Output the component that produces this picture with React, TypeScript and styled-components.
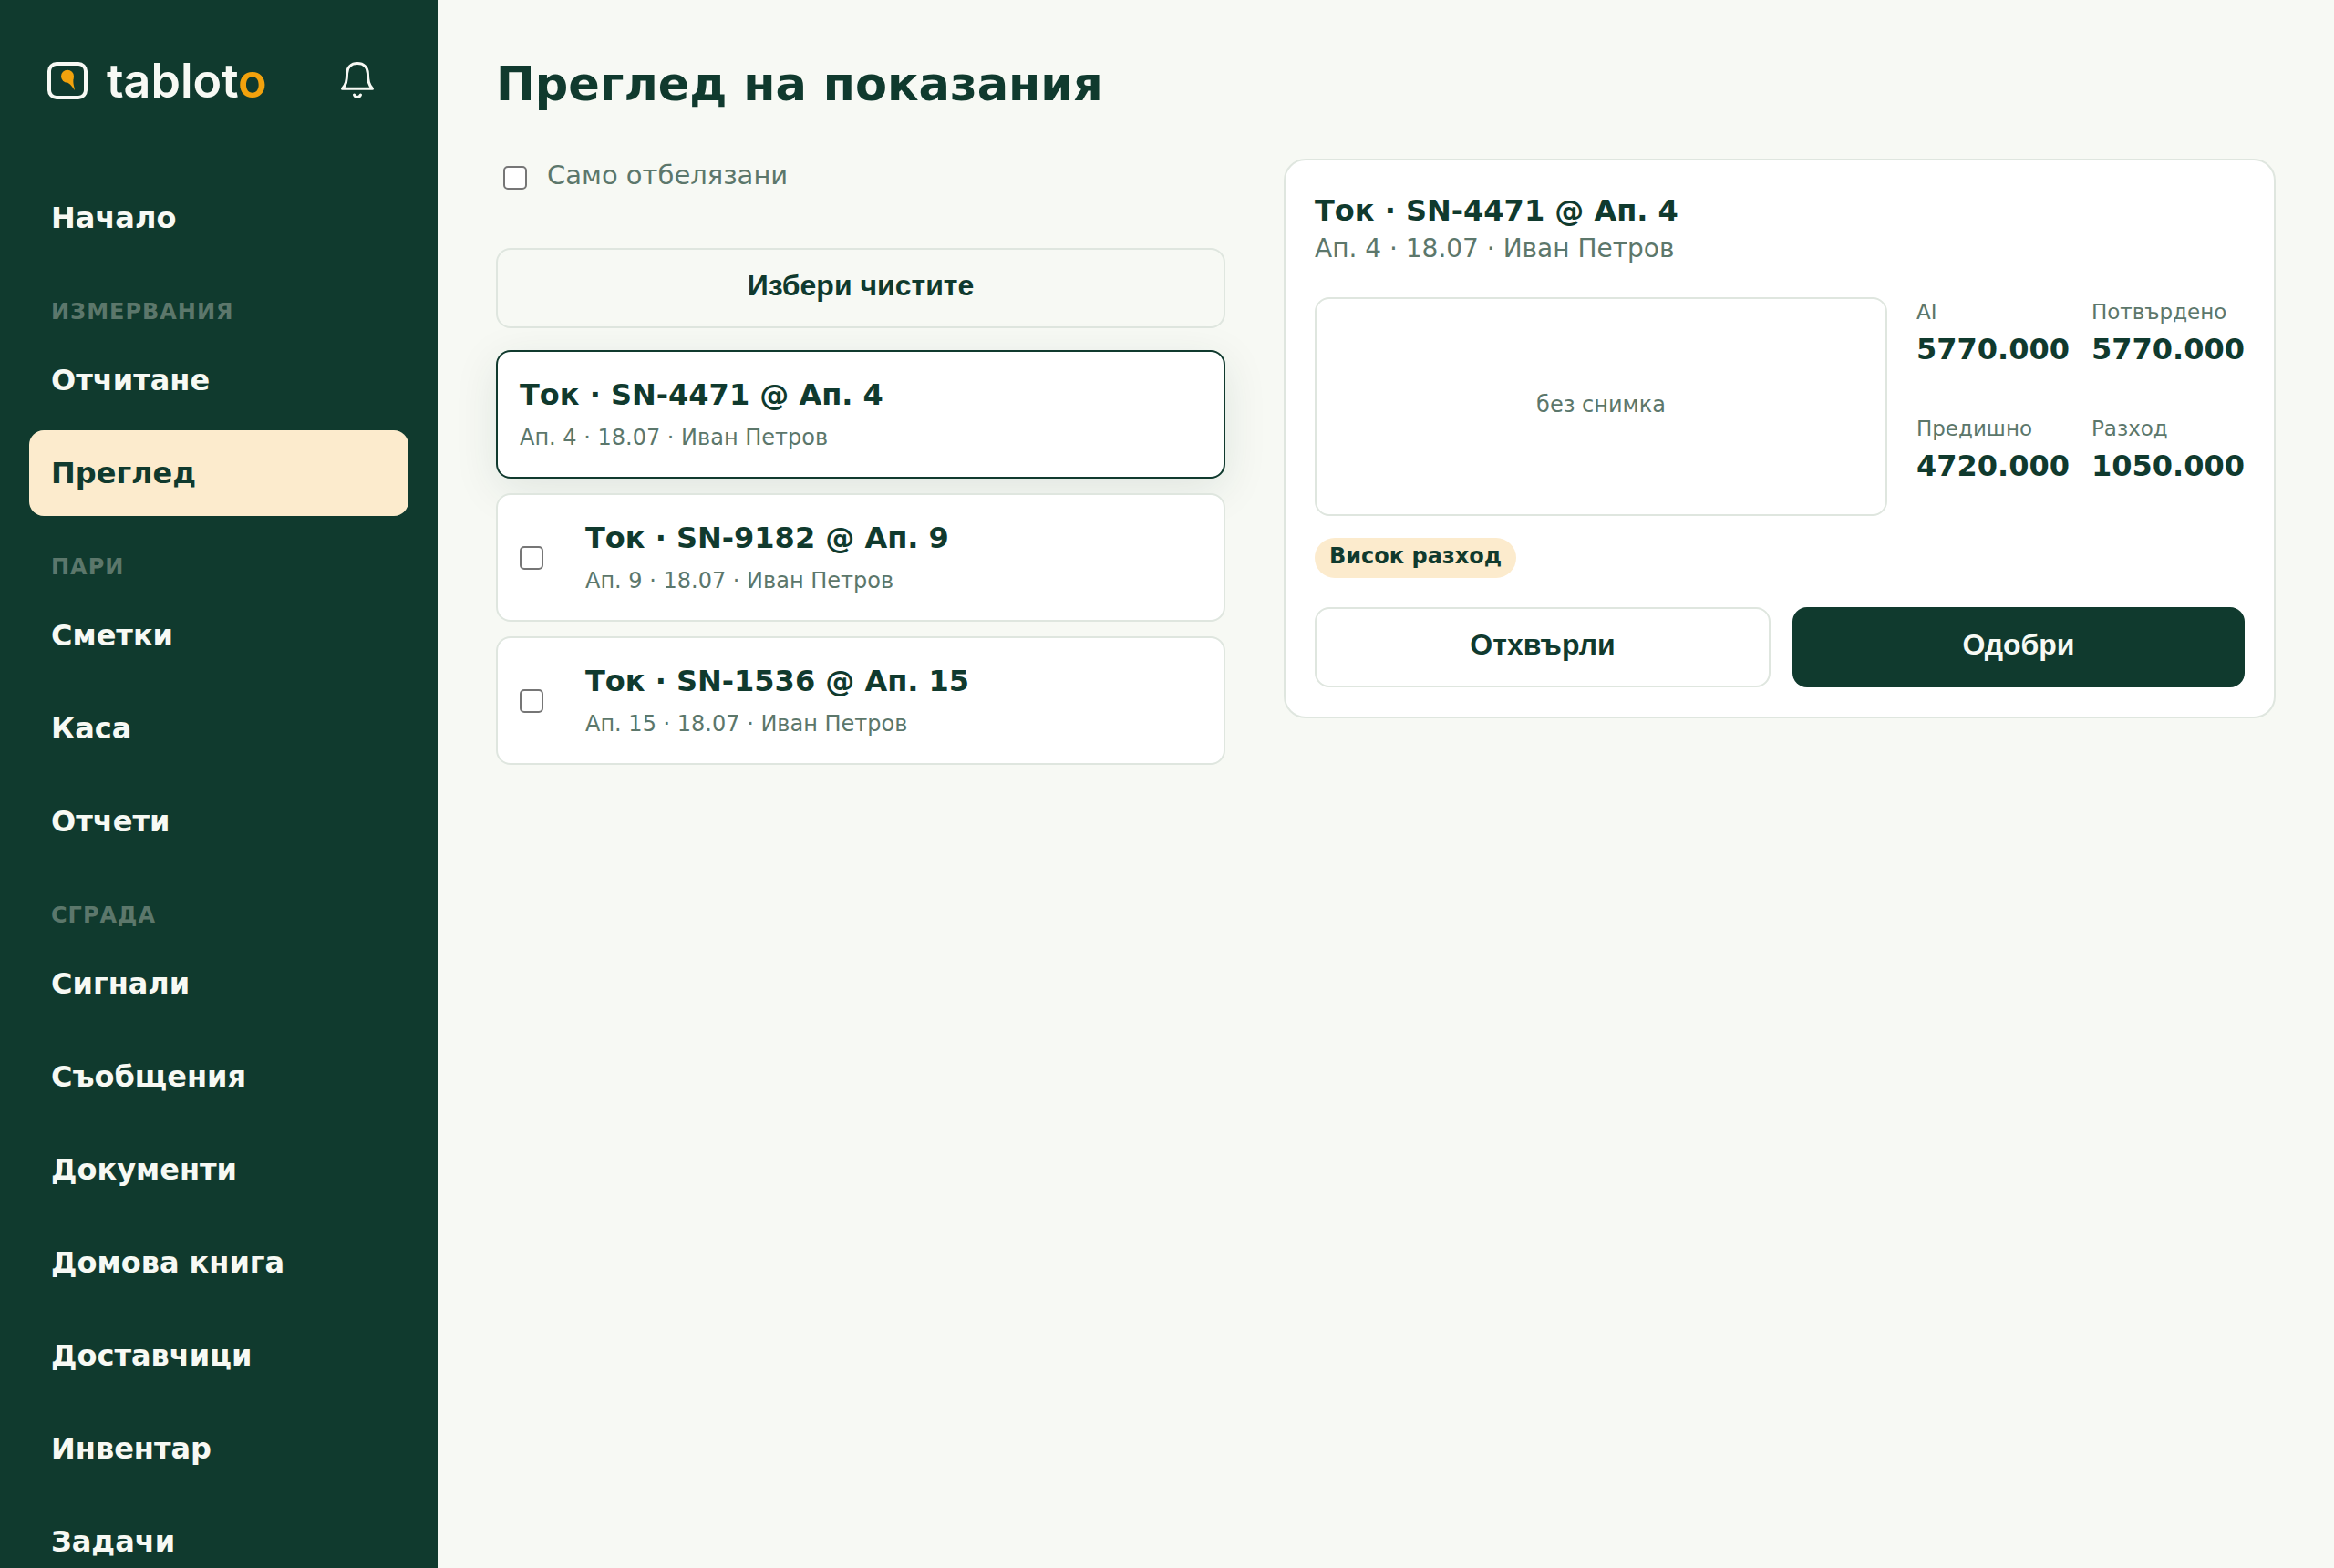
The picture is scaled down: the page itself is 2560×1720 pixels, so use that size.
import React, { useState } from 'react';
import styled, { createGlobalStyle, css } from 'styled-components';

const color = {
  forest: '#103a2e',
  paper: '#f7f9f4',
  white: '#ffffff',
  muted: '#5c776b',
  line: '#dfe6df',
  amber: '#f2a20d',
  cream: '#fcebcd',
  box: '#767676',
};

const GlobalStyle = createGlobalStyle`
  *, *::before, *::after { box-sizing: border-box; }
  html, body, #root { height: 100%; }
  body {
    margin: 0;
    background: ${color.paper};
    color: ${color.forest};
    font-family: "DejaVu Sans", sans-serif;
    font-size: 32px;
    line-height: 46px;
  }
  h1, h2, h3, p, ul, dl, dd { margin: 0; padding: 0; }
  ul { list-style: none; }
`;

const Shell = styled.div`
  display: grid;
  grid-template-columns: 480px minmax(0, 1fr);
  height: 100vh;
  overflow: hidden;
`;

const Sidebar = styled.aside`
  display: flex;
  flex-direction: column;
  min-height: 0;
  overflow: hidden;
  padding: 44px 32px 0;
  background: ${color.forest};
  color: ${color.paper};
`;

const SidebarHead = styled.header`
  display: flex;
  align-items: center;
  justify-content: space-between;
  height: 88px;
  margin-bottom: 60px;
  padding: 0 12px 0 20px;
  flex: none;
`;

const Brand = styled.a`
  display: flex;
  align-items: center;
  gap: 21px;
  color: ${color.paper};
  font: 600 52px/60px Inter, sans-serif;
  text-decoration: none;
`;

const BrandName = styled.span`
  padding-top: 2px;
`;

const BrandAccent = styled.span`
  color: ${color.amber};
`;

const IconButton = styled.button`
  display: grid;
  place-items: center;
  width: 88px;
  height: 88px;
  padding: 0;
  border: 0;
  background: none;
  color: inherit;
  cursor: pointer;
`;

const Nav = styled.nav`
  display: flex;
  flex-direction: column;
  gap: 8px;
`;

const NavHeading = styled.h2`
  padding: 30px 24px 2px;
  color: ${color.muted};
  font-size: 24px;
  line-height: 36px;
  font-weight: 700;
  letter-spacing: 1px;
  text-transform: uppercase;
`;

const NavLink = styled.a<{ $active?: boolean }>`
  display: block;
  flex: none;
  padding: 24px;
  border-radius: 16px;
  background: ${(p) => (p.$active ? color.cream : 'transparent')};
  color: ${(p) => (p.$active ? color.forest : color.paper)};
  font-weight: 700;
  text-decoration: none;
`;

const Main = styled.main`
  padding: 60px 64px;
  overflow: auto;
`;

const PageTitle = styled.h1`
  margin-bottom: 48px;
  font-size: 51px;
  line-height: 66px;
  font-weight: 700;
`;

const Columns = styled.div`
  display: grid;
  grid-template-columns: 800px minmax(0, 1fr);
  align-items: start;
  gap: 64px;
`;

const QueueColumn = styled.section`
  display: flex;
  flex-direction: column;
  gap: 24px;
`;

const Filter = styled.label`
  display: flex;
  align-items: flex-start;
  gap: 22px;
  height: 74px;
  padding-left: 8px;
  color: ${color.muted};
  font-size: 29px;
  line-height: 36px;
`;

const Checkbox = styled.input.attrs({ type: 'checkbox' })`
  appearance: none;
  flex: none;
  width: 26px;
  height: 26px;
  margin: 0;
  border: 2px solid ${color.box};
  border-radius: 5px;
  background: ${color.white};

  &:checked {
    border-color: ${color.forest};
    background: ${color.forest};
  }

  ${Filter} & {
    margin-top: 8px;
  }
`;

const Button = styled.button<{ $primary?: boolean }>`
  height: 88px;
  padding: 0 32px 6px;
  border-radius: 16px;
  font: 700 32px/36px "Liberation Sans", Arial, sans-serif;
  cursor: pointer;
  ${(p) =>
    p.$primary
      ? css`
          border: 0;
          background: ${color.forest};
          color: ${color.paper};
        `
      : css`
          border: 2px solid ${color.line};
          background: transparent;
          color: ${color.forest};
        `}
`;

const Queue = styled.ul`
  display: flex;
  flex-direction: column;
  gap: 16px;
`;

const QueueCard = styled.li<{ $selected: boolean }>`
  display: flex;
  align-items: center;
  gap: 24px;
  padding: 24px;
  border: 2px solid ${(p) => (p.$selected ? color.forest : color.line)};
  border-radius: 16px;
  background: ${color.white};
  box-shadow: ${(p) => (p.$selected ? '0 12px 48px rgba(16, 58, 46, 0.1)' : 'none')};
`;

const PickLabel = styled.label`
  display: flex;
  align-items: center;
  width: 48px;
  height: 88px;
`;

const OpenButton = styled.button`
  flex: 1;
  padding: 0;
  border: 0;
  background: none;
  color: inherit;
  font: inherit;
  text-align: left;
  cursor: pointer;
`;

const CardTitle = styled.span`
  display: block;
  margin-bottom: 6px;
  font-weight: 700;
`;

const CardMeta = styled.span`
  display: block;
  color: ${color.muted};
  font-size: 24px;
  line-height: 37px;
`;

const Panel = styled.article`
  padding: 32px;
  border: 2px solid ${color.line};
  border-radius: 24px;
  background: ${color.white};
`;

const PanelTitle = styled.h2`
  font-size: 32px;
  line-height: 46px;
  font-weight: 700;
`;

const PanelMeta = styled.p`
  color: ${color.muted};
  font-size: 28px;
  line-height: 38px;
`;

const Evidence = styled.div`
  display: grid;
  grid-template-columns: minmax(0, 1fr) auto;
  gap: 32px;
  margin: 34px 0 24px;
`;

const Photo = styled.div`
  display: grid;
  place-items: center;
  height: 240px;
  padding-bottom: 4px;
  border: 2px solid ${color.line};
  border-radius: 16px;
  color: ${color.muted};
  font-size: 24px;
  line-height: 36px;
`;

const Stats = styled.dl`
  display: grid;
  grid-template-columns: auto auto;
  gap: 16px 24px;
`;

const StatLabel = styled.dt`
  margin-bottom: 2px;
  color: ${color.muted};
  font-size: 23px;
  line-height: 32px;
`;

const StatValue = styled.dd`
  font-weight: 700;
`;

const Badge = styled.span`
  display: block;
  width: fit-content;
  padding: 2px 16px 6px;
  border-radius: 22px;
  background: ${color.cream};
  font-size: 24px;
  line-height: 36px;
  font-weight: 700;
`;

const Actions = styled.div`
  display: flex;
  gap: 24px;
  margin-top: 32px;

  ${Button} {
    flex: 1 1 0;
  }
`;

const navGroups = [
  { title: '', items: ['Начало'] },
  { title: 'Измервания', items: ['Отчитане', 'Преглед'] },
  { title: 'Пари', items: ['Сметки', 'Каса', 'Отчети'] },
  {
    title: 'Сграда',
    items: ['Сигнали', 'Съобщения', 'Документи', 'Домова книга', 'Доставчици', 'Инвентар', 'Задачи'],
  },
];

const readings = [
  { id: 'SN-4471', flat: 4, flagged: true },
  { id: 'SN-9182', flat: 9, flagged: false },
  { id: 'SN-1536', flat: 15, flagged: false },
];

const stats = [
  ['AI', '5770.000'],
  ['Потвърдено', '5770.000'],
  ['Предишно', '4720.000'],
  ['Разход', '1050.000'],
];

const titleOf = (r: { id: string; flat: number }) => `Ток · ${r.id} @ Ап. ${r.flat}`;
const metaOf = (r: { flat: number }) => `Ап. ${r.flat} · 18.07 · Иван Петров`;

const LogoMark = () => (
  <svg width="44" height="42" viewBox="0 0 44 42" fill="none" aria-hidden="true">
    <rect x="2" y="3" width="40" height="37" rx="8" stroke={color.paper} strokeWidth="4" />
    <circle cx="22" cy="16.800" r="7" fill={color.amber} />
    <path d="M22 23.700C25 24.500 27.500 28.500 29.900 32C29.800 28 27.400 24.500 28.800 18Z" fill={color.amber} />
  </svg>
);

const BellIcon = () => (
  <svg
    width="48"
    height="48"
    viewBox="0 0 48 48"
    fill="none"
    stroke="currentColor"
    strokeWidth="3"
    strokeLinecap="round"
    strokeLinejoin="round"
    aria-hidden="true"
  >
    <path d="M24 5.500C17 5.500 12.800 10 12.600 16.500C12.400 25 11.500 29 7.500 33.300H40.500C36.500 29 35.600 25 35.400 16.500C35.200 10 31 5.500 24 5.500Z" />
    <path d="M20.500 40c.8 1.600 2 2.400 3.500 2.400s2.700-.8 3.500-2.400" />
  </svg>
);

export default function App() {
  const [selected, setSelected] = useState(0);
  const reading = readings[selected];

  return (
    <>
      <GlobalStyle />
      <Shell>
        <Sidebar>
          <SidebarHead>
            <Brand href="#home">
              <LogoMark />
              <BrandName>
                tablot<BrandAccent>o</BrandAccent>
              </BrandName>
            </Brand>
            <IconButton type="button" aria-label="Известия">
              <BellIcon />
            </IconButton>
          </SidebarHead>
          <Nav>
            {navGroups.map((group) => (
              <React.Fragment key={group.title}>
                {group.title && <NavHeading>{group.title}</NavHeading>}
                {group.items.map((item) => (
                  <NavLink key={item} href="#" $active={item === 'Преглед'}>
                    {item}
                  </NavLink>
                ))}
              </React.Fragment>
            ))}
          </Nav>
        </Sidebar>
        <Main>
          <PageTitle>Преглед на показания</PageTitle>
          <Columns>
            <QueueColumn>
              <Filter>
                <Checkbox />
                Само отбелязани
              </Filter>
              <Button type="button">Избери чистите</Button>
              <Queue>
                {readings.map((r, i) => (
                  <QueueCard key={r.id} $selected={i === selected}>
                    {!r.flagged && (
                      <PickLabel>
                        <Checkbox aria-label={titleOf(r)} />
                      </PickLabel>
                    )}
                    <OpenButton type="button" onClick={() => setSelected(i)}>
                      <CardTitle>{titleOf(r)}</CardTitle>
                      <CardMeta>{metaOf(r)}</CardMeta>
                    </OpenButton>
                  </QueueCard>
                ))}
              </Queue>
            </QueueColumn>
            <Panel>
              <PanelTitle>{titleOf(reading)}</PanelTitle>
              <PanelMeta>{metaOf(reading)}</PanelMeta>
              <Evidence>
                <Photo>без снимка</Photo>
                <Stats>
                  {stats.map(([label, value]) => (
                    <div key={label}>
                      <StatLabel>{label}</StatLabel>
                      <StatValue>{value}</StatValue>
                    </div>
                  ))}
                </Stats>
              </Evidence>
              <Badge>Висок разход</Badge>
              <Actions>
                <Button type="button">Отхвърли</Button>
                <Button type="button" $primary>
                  Одобри
                </Button>
              </Actions>
            </Panel>
          </Columns>
        </Main>
      </Shell>
    </>
  );
}
